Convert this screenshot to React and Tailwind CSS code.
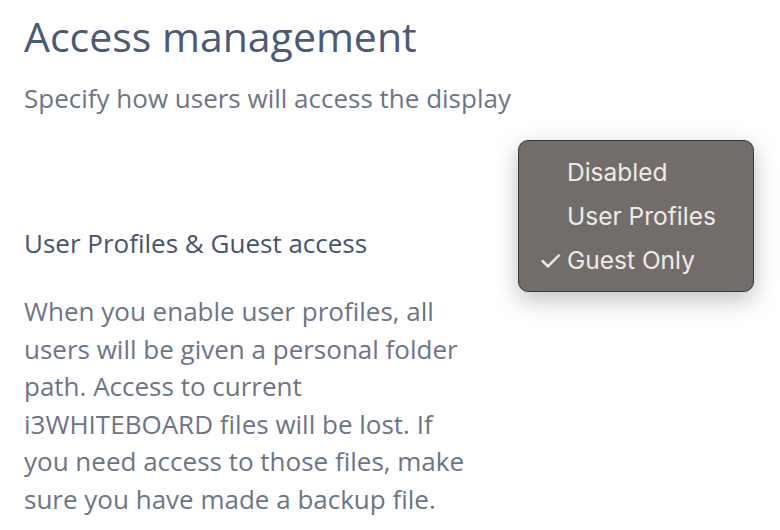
import React from 'react';

const options = ['Disabled', 'User Profiles', 'Guest Only'];

// Popup menu shown over the page, like a native select
const SelectMenu = ({ selected }) => (
  <div className="absolute left-[518px] top-[140px] w-[236px] rounded-[10px] border border-[#3b3836] bg-[#6b6562]/95 py-[9px] shadow-[0_8px_24px_rgba(0,0,0,0.25)] font-['Inter',sans-serif]">
    {options.map((opt) => (
      <div key={opt} className="flex h-[44px] items-center text-[24.5px] text-[#eeeae8]">
        <span className="w-[48px] pl-[19px] text-[28px] leading-none">{opt === selected ? '✓' : ''}</span>
        <span>{opt}</span>
      </div>
    ))}
  </div>
);

export default function App() {
  return (
    <div className="relative h-[530px] w-[780px] overflow-hidden bg-white px-6 pt-[12px] font-['Open_Sans',sans-serif]">
      <h1 className="text-[41px] leading-[48px] font-medium text-[#4a5a77]">Access management</h1>
      <p className="mt-[21px] text-[26px] leading-[34px] text-[#6c7586]">Specify how users will access the display</p>

      <h2 className="mt-[111px] text-[26px] leading-[34px] text-[#45546f]">User Profiles &amp; Guest access</h2>
      <p className="mt-[33px] w-[450px] text-[26px] leading-[37.6px] text-[#6c7586]">
        When you enable user profiles, all users will be given a personal folder path. Access to current i3WHITEBOARD files will be lost. If you need access to those files, make sure you have made a backup file.
      </p>

      <SelectMenu selected="Guest Only" />
    </div>
  );
}
